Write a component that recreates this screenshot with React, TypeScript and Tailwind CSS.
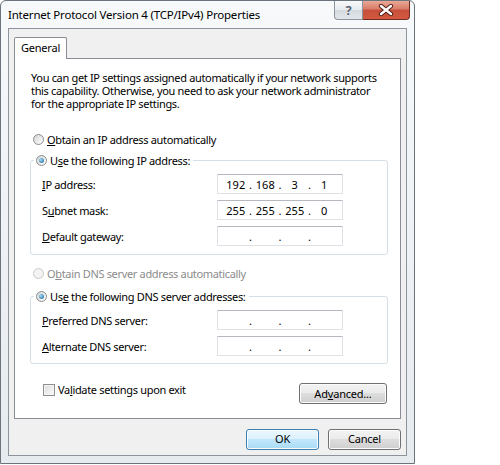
import { Fragment } from "react";

const font = { fontFamily: '"Noto Sans", "Open Sans", sans-serif' };

function Radio({ checked, disabled }: { checked?: boolean; disabled?: boolean }) {
  return (
    <span
      className={`inline-flex h-[11px] w-[11px] shrink-0 items-center justify-center rounded-full border ${
        disabled
          ? "border-[#c9c9c9] bg-[#f3f3f3]"
          : "border-[#8a8c8e] bg-[linear-gradient(135deg,#d4d4d4,#ffffff)]"
      }`}
    >
      {checked && (
        <span className="h-[5px] w-[5px] rounded-full bg-[radial-gradient(circle_at_35%_35%,#9fdcf8,#1b5f93)]" />
      )}
    </span>
  );
}

function IpField({ parts }: { parts: string[] }) {
  return (
    <div className="flex h-[20px] w-[126px] shrink-0 items-center border border-[#dfe3e8] border-t-[#b5b8be] bg-white px-[5px] text-[11px] tracking-normal text-black">
      {parts.map((p, i) => (
        <Fragment key={i}>
          {i > 0 && <span className="w-[4px] text-center">.</span>}
          <span className="w-[26px] text-center">{p}</span>
        </Fragment>
      ))}
    </div>
  );
}

function Row({ label, parts }: { label: React.ReactNode; parts: string[] }) {
  return (
    <div className="flex items-center">
      <span className="w-[175px]">{label}</span>
      <IpField parts={parts} />
    </div>
  );
}

function Button({ children, primary, className }: { children: React.ReactNode; primary?: boolean; className?: string }) {
  return (
    <button
      className={`flex h-[21px] items-center justify-center rounded-[3px] border text-[11px] tracking-[-0.2px] text-black shadow-[inset_0_0_0_1px_#fcfcfc] ${
        primary
          ? "border-[#3c7fb1] bg-[linear-gradient(#ecf7fd_0%,#dcf1fc_50%,#c1e7fd_50%,#a9daf5_100%)]"
          : "border-[#707070] bg-[linear-gradient(#f2f2f2_0%,#ebebeb_50%,#dddddd_50%,#cfcfcf_100%)]"
      } ${className ?? ""}`}
    >
      {children}
    </button>
  );
}

export default function App() {
  const empty = ["", "", "", ""];
  return (
    <div className="h-[465px] w-[500px] overflow-hidden bg-white" style={font}>
      {/* window frame */}
      <div className="flex h-[464px] w-[415px] flex-col rounded-t-[6px] border border-[#6b737c] bg-[linear-gradient(#f7f9fb,#e6ebf0)] px-[7px] pb-[7px]">
        {/* title bar */}
        <div className="flex h-[27px] shrink-0 items-start justify-between">
          <span className="pt-[6px] text-[11.5px] leading-[16px] tracking-[-0.2px] text-black">
            Internet Protocol Version 4 (TCP/IPv4) Properties
          </span>
          <div className="-mr-[3px] flex h-[19px]">
            <div className="flex w-[29px] items-center justify-center rounded-bl-[4px] border border-t-0 border-[#8c959f] bg-[linear-gradient(#f8f9fb_0%,#e6eaee_50%,#d3d9df_50%,#e2e6ea_100%)]">
              <span className="text-[13px] font-bold leading-none text-[#5b6574] [text-shadow:0_0_1px_#fff]">?</span>
            </div>
            <div className="flex w-[47px] items-center justify-center rounded-br-[4px] border border-l-0 border-t-0 border-[#6e2b23] bg-[linear-gradient(#e9a897_0%,#d87c66_45%,#c7503b_50%,#d2593f_100%)]">
              <svg width="16" height="12" viewBox="0 0 16 12">
                <path d="M3 2 L13 10 M13 2 L3 10" stroke="#4a1a14" strokeWidth="4.2" strokeLinecap="round" />
                <path d="M3 2 L13 10 M13 2 L3 10" stroke="#ffffff" strokeWidth="2.4" strokeLinecap="round" />
              </svg>
            </div>
          </div>
        </div>

        {/* client area */}
        <div className="flex flex-1 flex-col border border-[#8d949c] bg-[#f0f0f0] px-[5px] pt-[8px]">
          {/* tab header */}
          <div className="relative z-10 -mb-px flex">
            <div className="flex h-[22px] w-[53px] items-center justify-center rounded-t-[2px] border border-b-0 border-[#898c95] bg-white text-[11px] tracking-[-0.2px] text-black">
              General
            </div>
          </div>

          {/* tab panel */}
          <div className="flex h-[361px] flex-col border border-[#898c95] bg-white text-[11px] leading-[13px] tracking-[-0.33px] text-black">
            <p className="pl-[16px] pt-[12px] leading-[13px]">
              <span className="block">You can get IP settings assigned automatically if your network supports</span>
              <span className="block">this capability. Otherwise, you need to ask your network administrator</span>
              <span className="block">for the appropriate IP settings.</span>
            </p>

            <div className="ml-[18px] mt-[23px] flex items-center gap-[3px]">
              <Radio />
              <span>
                <u>O</u>btain an IP address automatically
              </span>
            </div>

            <fieldset className="ml-[15px] mr-[12px] mt-[8px] rounded-[3px] border border-[#d5dfe5] p-0">
              <legend className="ml-[3px] flex items-center gap-[3px] bg-white pl-[2px] pr-[3px]">
                <Radio checked />
                <span>
                  U<u>s</u>e the following IP address:
                </span>
              </legend>
              <div className="flex flex-col gap-[6px] pb-[8px] pl-[11px] pt-[7px]">
                <Row label={<><u>I</u>P address:</>} parts={["192", "168", "3", "1"]} />
                <Row label={<>S<u>u</u>bnet mask:</>} parts={["255", "255", "255", "0"]} />
                <Row label={<><u>D</u>efault gateway:</>} parts={empty} />
              </div>
            </fieldset>

            <div className="ml-[18px] mt-[12px] flex items-center gap-[3px] text-[#8b8b8b]">
              <Radio disabled />
              <span>
                O<u>b</u>tain DNS server address automatically
              </span>
            </div>

            <fieldset className="ml-[15px] mr-[12px] mt-[10px] rounded-[3px] border border-[#d5dfe5] p-0">
              <legend className="ml-[3px] flex items-center gap-[3px] bg-white pl-[2px] pr-[3px]">
                <Radio checked />
                <span>
                  Us<u>e</u> the following DNS server addresses:
                </span>
              </legend>
              <div className="flex flex-col gap-[6px] pb-[7px] pl-[11px] pt-[7px]">
                <Row label={<><u>P</u>referred DNS server:</>} parts={empty} />
                <Row label={<><u>A</u>lternate DNS server:</>} parts={empty} />
              </div>
            </fieldset>

            <div className="ml-[28px] mr-[13px] mt-[19px] flex items-start justify-between">
              <div className="flex items-center gap-[3px]">
                <span className="h-[12px] w-[12px] border border-[#8f8f8f] bg-[linear-gradient(135deg,#dcdcdc,#fbfbfb)] shadow-[inset_0_0_0_1px_#f4f4f4]" />
                <span>
                  Va<u>l</u>idate settings upon exit
                </span>
              </div>
              <Button className="w-[88px]">
                Ad<u>v</u>anced...
              </Button>
            </div>
          </div>

          {/* dialog buttons */}
          <div className="mt-[10px] flex justify-end gap-[9px]">
            <Button primary className="w-[73px]">
              OK
            </Button>
            <Button className="w-[73px]">Cancel</Button>
          </div>
        </div>
      </div>
    </div>
  );
}
